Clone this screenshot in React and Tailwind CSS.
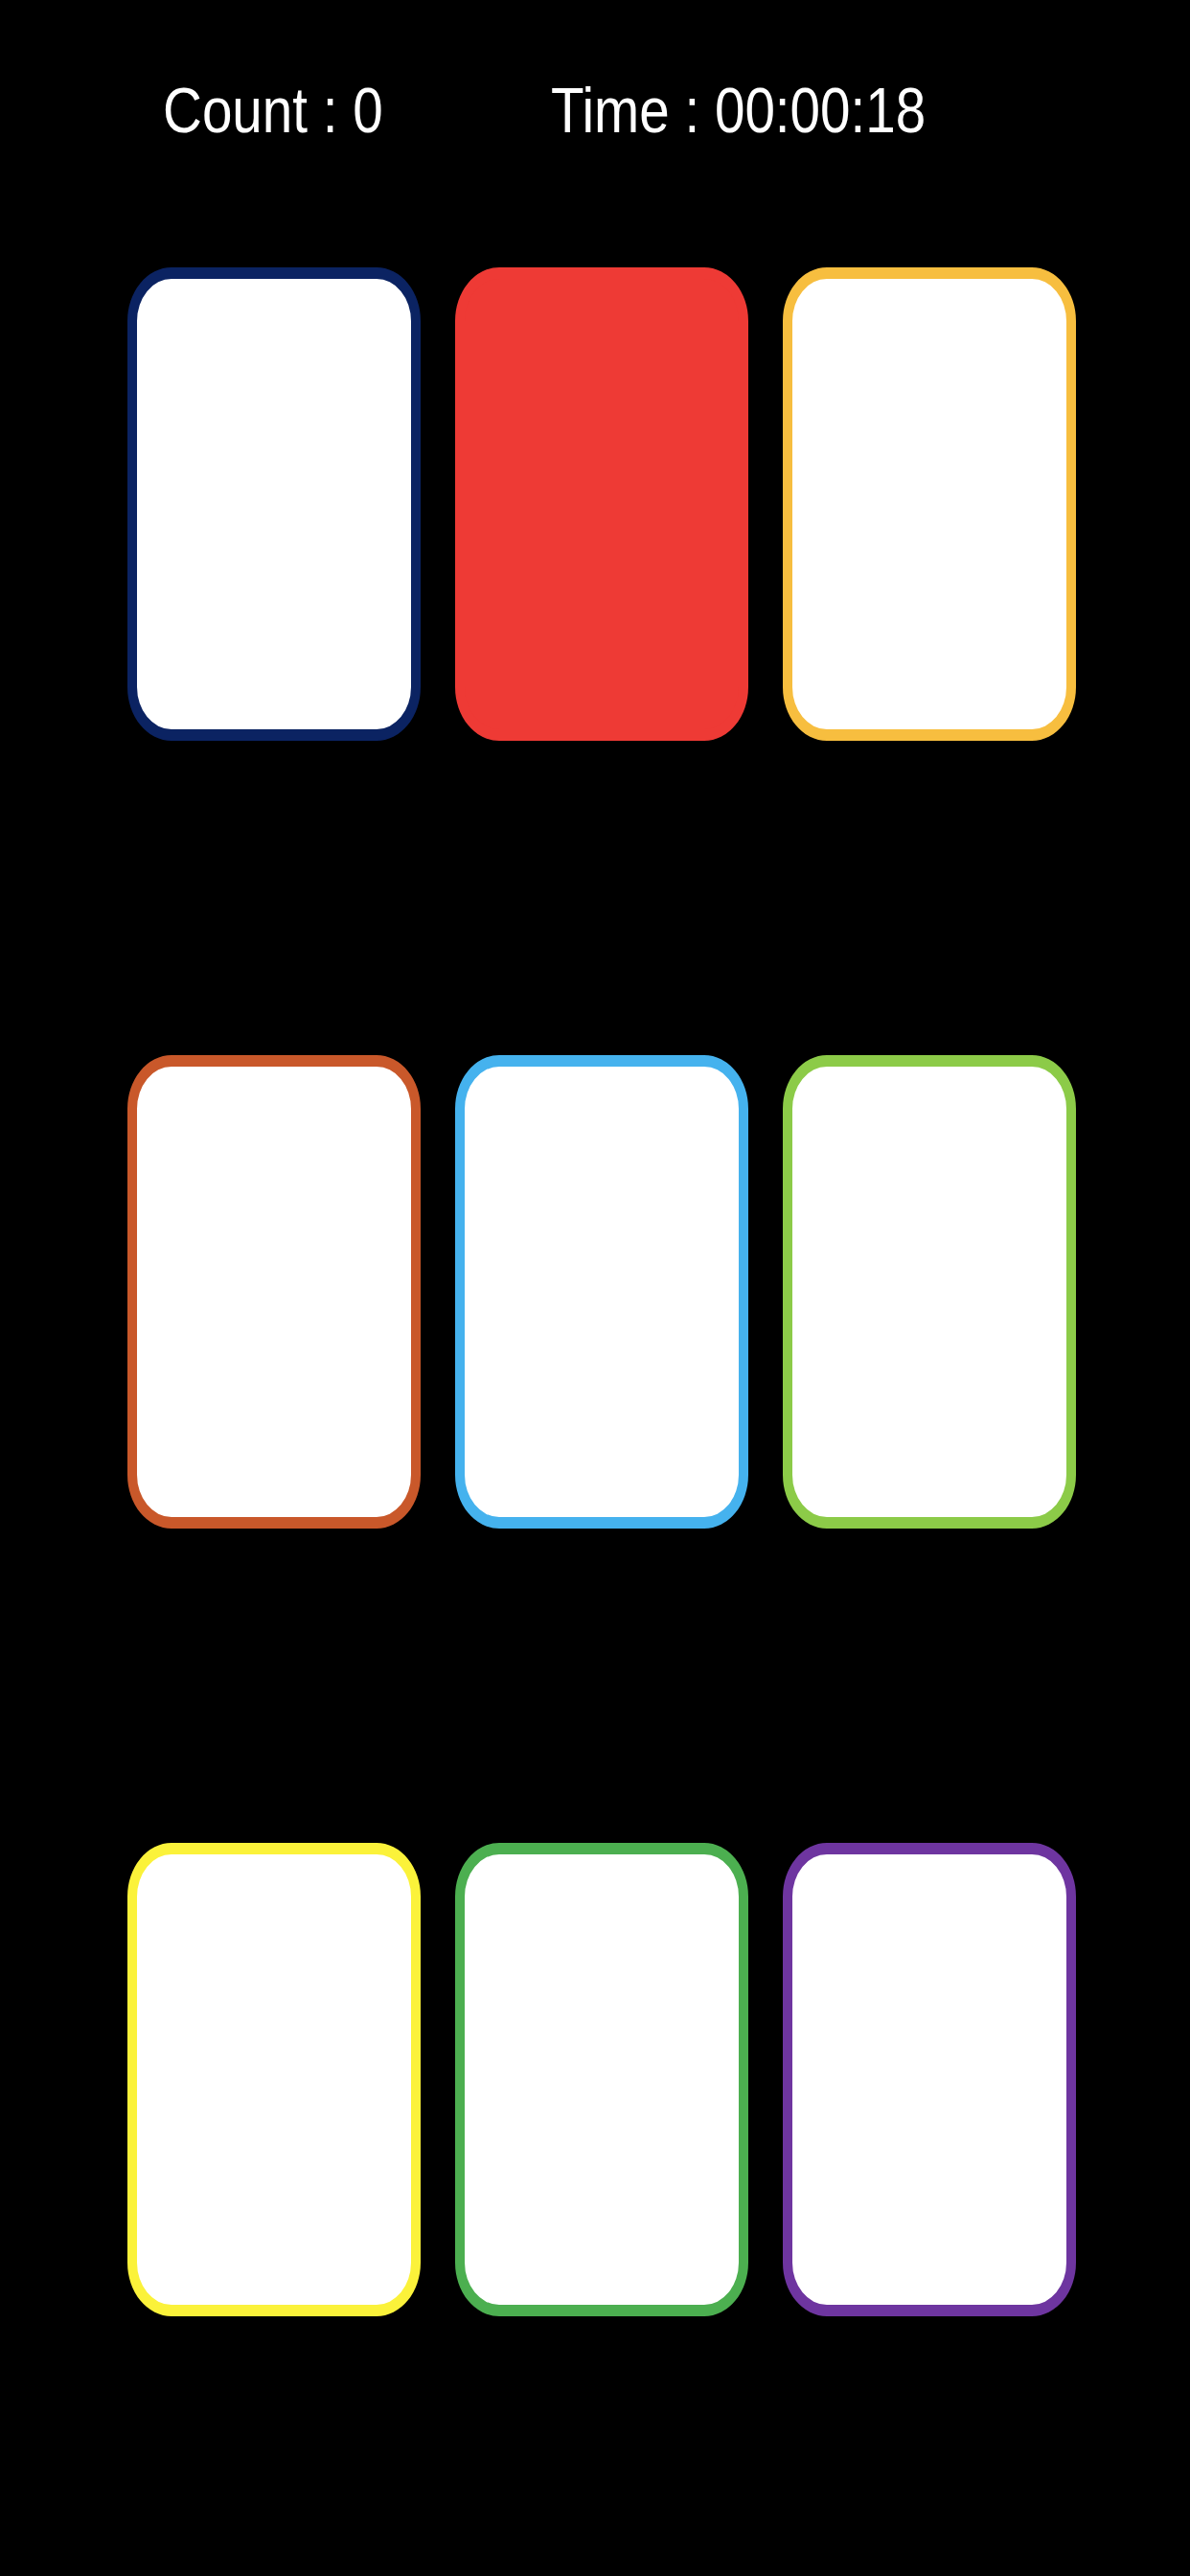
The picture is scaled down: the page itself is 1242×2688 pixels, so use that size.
export default function App() {
  const cards = [
    { border: "border-[#0b2362]", bg: "bg-white" },
    { border: "border-[#ee3a35]", bg: "bg-[#ee3a35]" },
    { border: "border-[#f7be3f]", bg: "bg-white" },
    { border: "border-[#c9582a]", bg: "bg-white" },
    { border: "border-[#45b2ee]", bg: "bg-white" },
    { border: "border-[#8ccb48]", bg: "bg-white" },
    { border: "border-[#fbf23a]", bg: "bg-white" },
    { border: "border-[#4caf50]", bg: "bg-white" },
    { border: "border-[#6e35a0]", bg: "bg-white" },
  ];
  return (
    <div
      className="w-[1242px] h-[2688px] bg-black overflow-hidden"
      style={{ fontFamily: '"Liberation Sans", Arial, sans-serif' }}
    >
      <div className="flex pt-[81px] pl-[170px] text-white text-[67px] leading-none">
        <div className="w-[405px]">
          <span className="inline-block origin-left scale-x-[0.845] whitespace-nowrap">Count : 0</span>
        </div>
        <div>
          <span className="inline-block origin-left scale-x-[0.845] whitespace-nowrap">Time : 00:00:18</span>
        </div>
      </div>
      <div className="mt-[131px] ml-[133px] grid grid-cols-[306px_306px_306px] gap-x-[36px] gap-y-[328px]">
        {cards.map((c, i) => (
          <div
            key={i}
            className={`h-[494px] border-x-[10px] border-y-[12px] rounded-[46px/56px] ${c.border} ${c.bg}`}
          />
        ))}
      </div>
    </div>
  );
}
